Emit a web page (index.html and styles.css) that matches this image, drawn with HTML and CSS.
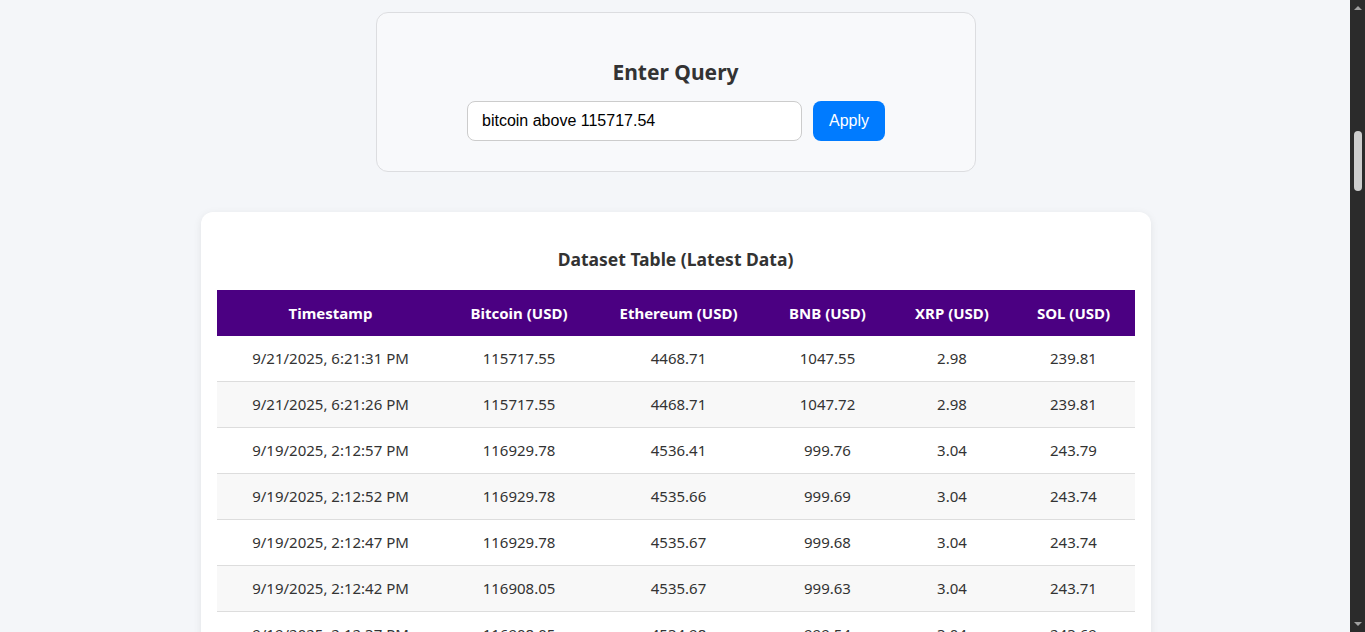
FILE: index.html
```html
<!DOCTYPE html>
<html lang="en">
<head>
<meta charset="utf-8">
<title>Crypto Dataset</title>
<link rel="stylesheet" href="styles.css">
</head>
<body>
<div class="viewport">
<main class="page">
  <section class="query-card">
    <h2 class="query-title">Enter Query</h2>
    <div class="query-row">
      <input class="query-input" type="text" value="bitcoin above 115717.54">
      <button class="query-btn">Apply</button>
    </div>
  </section>

  <section class="table-card">
    <h3 class="table-title">Dataset Table (Latest Data)</h3>
    <table class="data-table">
      <thead>
        <tr><th>Timestamp</th><th>Bitcoin (USD)</th><th>Ethereum (USD)</th><th>BNB (USD)</th><th>XRP (USD)</th><th>SOL (USD)</th></tr>
      </thead>
      <tbody>
        <tr><td>9/21/2025, 6:21:31 PM</td><td>115717.55</td><td>4468.71</td><td>1047.55</td><td>2.98</td><td>239.81</td></tr>
        <tr><td>9/21/2025, 6:21:26 PM</td><td>115717.55</td><td>4468.71</td><td>1047.72</td><td>2.98</td><td>239.81</td></tr>
        <tr><td>9/19/2025, 2:12:57 PM</td><td>116929.78</td><td>4536.41</td><td>999.76</td><td>3.04</td><td>243.79</td></tr>
        <tr><td>9/19/2025, 2:12:52 PM</td><td>116929.78</td><td>4535.66</td><td>999.69</td><td>3.04</td><td>243.74</td></tr>
        <tr><td>9/19/2025, 2:12:47 PM</td><td>116929.78</td><td>4535.67</td><td>999.68</td><td>3.04</td><td>243.74</td></tr>
        <tr><td>9/19/2025, 2:12:42 PM</td><td>116908.05</td><td>4535.67</td><td>999.63</td><td>3.04</td><td>243.71</td></tr>
        <tr><td>9/19/2025, 2:12:37 PM</td><td>116908.05</td><td>4534.98</td><td>999.54</td><td>3.04</td><td>243.69</td></tr>
      </tbody>
    </table>
  </section>
</main>
</div>
<div class="scrollbar" aria-hidden="true">
  <span class="sb-arrow sb-up"></span>
  <div class="sb-track"><span class="sb-thumb"></span></div>
  <span class="sb-arrow sb-down"></span>
</div>
</body>
</html>
```

FILE: styles.css
```css
html, body {
  height: 100%;
}
body {
  margin: 0;
  display: flex;
  overflow: hidden;
  background: #f4f6f9;
  font-family: "Noto Sans", "Open Sans", sans-serif;
  color: #333;
}
.viewport {
  flex: 1;
  min-width: 0;
  height: 632px;
  overflow: hidden;
}
.page {
  display: flex;
  flex-direction: column;
  align-items: center;
  padding: 12px 0 40px 1px;
  gap: 40px;
}
.query-card {
  box-sizing: border-box;
  width: 600px;
  background: #f8f9fb;
  border: 1px solid #dcdde0;
  border-radius: 12px;
  padding: 47px 20px 30px;
  display: flex;
  flex-direction: column;
  align-items: center;
}
.query-title {
  margin: 0 0 17px;
  font-size: 21px;
  line-height: 24px;
  font-weight: 700;
  color: #333;
}
.query-row {
  display: flex;
  gap: 11px;
  margin-left: 1px;
}
.query-input {
  box-sizing: border-box;
  width: 335px;
  height: 40px;
  padding: 0 14px;
  border: 1px solid #ccc;
  border-radius: 8px;
  font-family: "Liberation Sans", Arial, sans-serif;
  font-size: 16px;
  color: #000;
  background: #fff;
  outline: none;
}
.query-btn {
  box-sizing: border-box;
  width: 72px;
  height: 40px;
  border: none;
  border-radius: 8px;
  background: #007bff;
  color: #fff;
  font-family: "Liberation Sans", Arial, sans-serif;
  font-size: 16px;
  cursor: pointer;
}
.table-card {
  box-sizing: border-box;
  width: 950px;
  background: #fff;
  border-radius: 12px;
  padding: 16px 16px 20px;
  box-shadow: 0 2px 8px rgba(0, 0, 0, 0.08);
}
.table-title {
  margin: 19px 0 18px;
  text-align: center;
  font-size: 17.5px;
  line-height: 25px;
  font-weight: 700;
  color: #333;
}
.data-table {
  width: 100%;
  border-collapse: collapse;
  table-layout: fixed;
  font-size: 15px;
}
.data-table th:nth-child(1) { width: 212px; }
.data-table th:nth-child(2) { width: 133px; }
.data-table th:nth-child(3) { width: 154px; }
.data-table th:nth-child(4) { width: 112px; }
.data-table th:nth-child(5) { width: 105px; }
.data-table th {
  background: #4b0082;
  color: #fff;
  font-weight: 700;
  padding: 12px 8px;
  line-height: 22px;
  text-align: center;
  white-space: nowrap;
}
.data-table td {
  padding: 12px 8px;
  line-height: 21px;
  text-align: center;
  border-bottom: 1px solid #ddd;
  color: #333;
  white-space: nowrap;
}
.data-table tbody tr:nth-child(even) td {
  background: #f8f8f8;
}

/* browser-style dark scrollbar */
.scrollbar {
  flex: 0 0 15px;
  height: 632px;
  background: #2b2b2b;
  display: flex;
  flex-direction: column;
  align-items: center;
}
.sb-arrow {
  flex: 0 0 auto;
  width: 0;
  height: 0;
  border-left: 4px solid transparent;
  border-right: 4px solid transparent;
}
.sb-up {
  margin-top: 6px;
  border-bottom: 4px solid #a0a0a0;
}
.sb-down {
  margin-bottom: 6px;
  border-top: 4px solid #a0a0a0;
}
.sb-track {
  flex: 1;
  width: 100%;
  display: flex;
  justify-content: center;
}
.sb-thumb {
  margin-top: 121px;
  width: 8px;
  height: 60px;
  border-radius: 4px;
  background: #cdcdcd;
}
```
